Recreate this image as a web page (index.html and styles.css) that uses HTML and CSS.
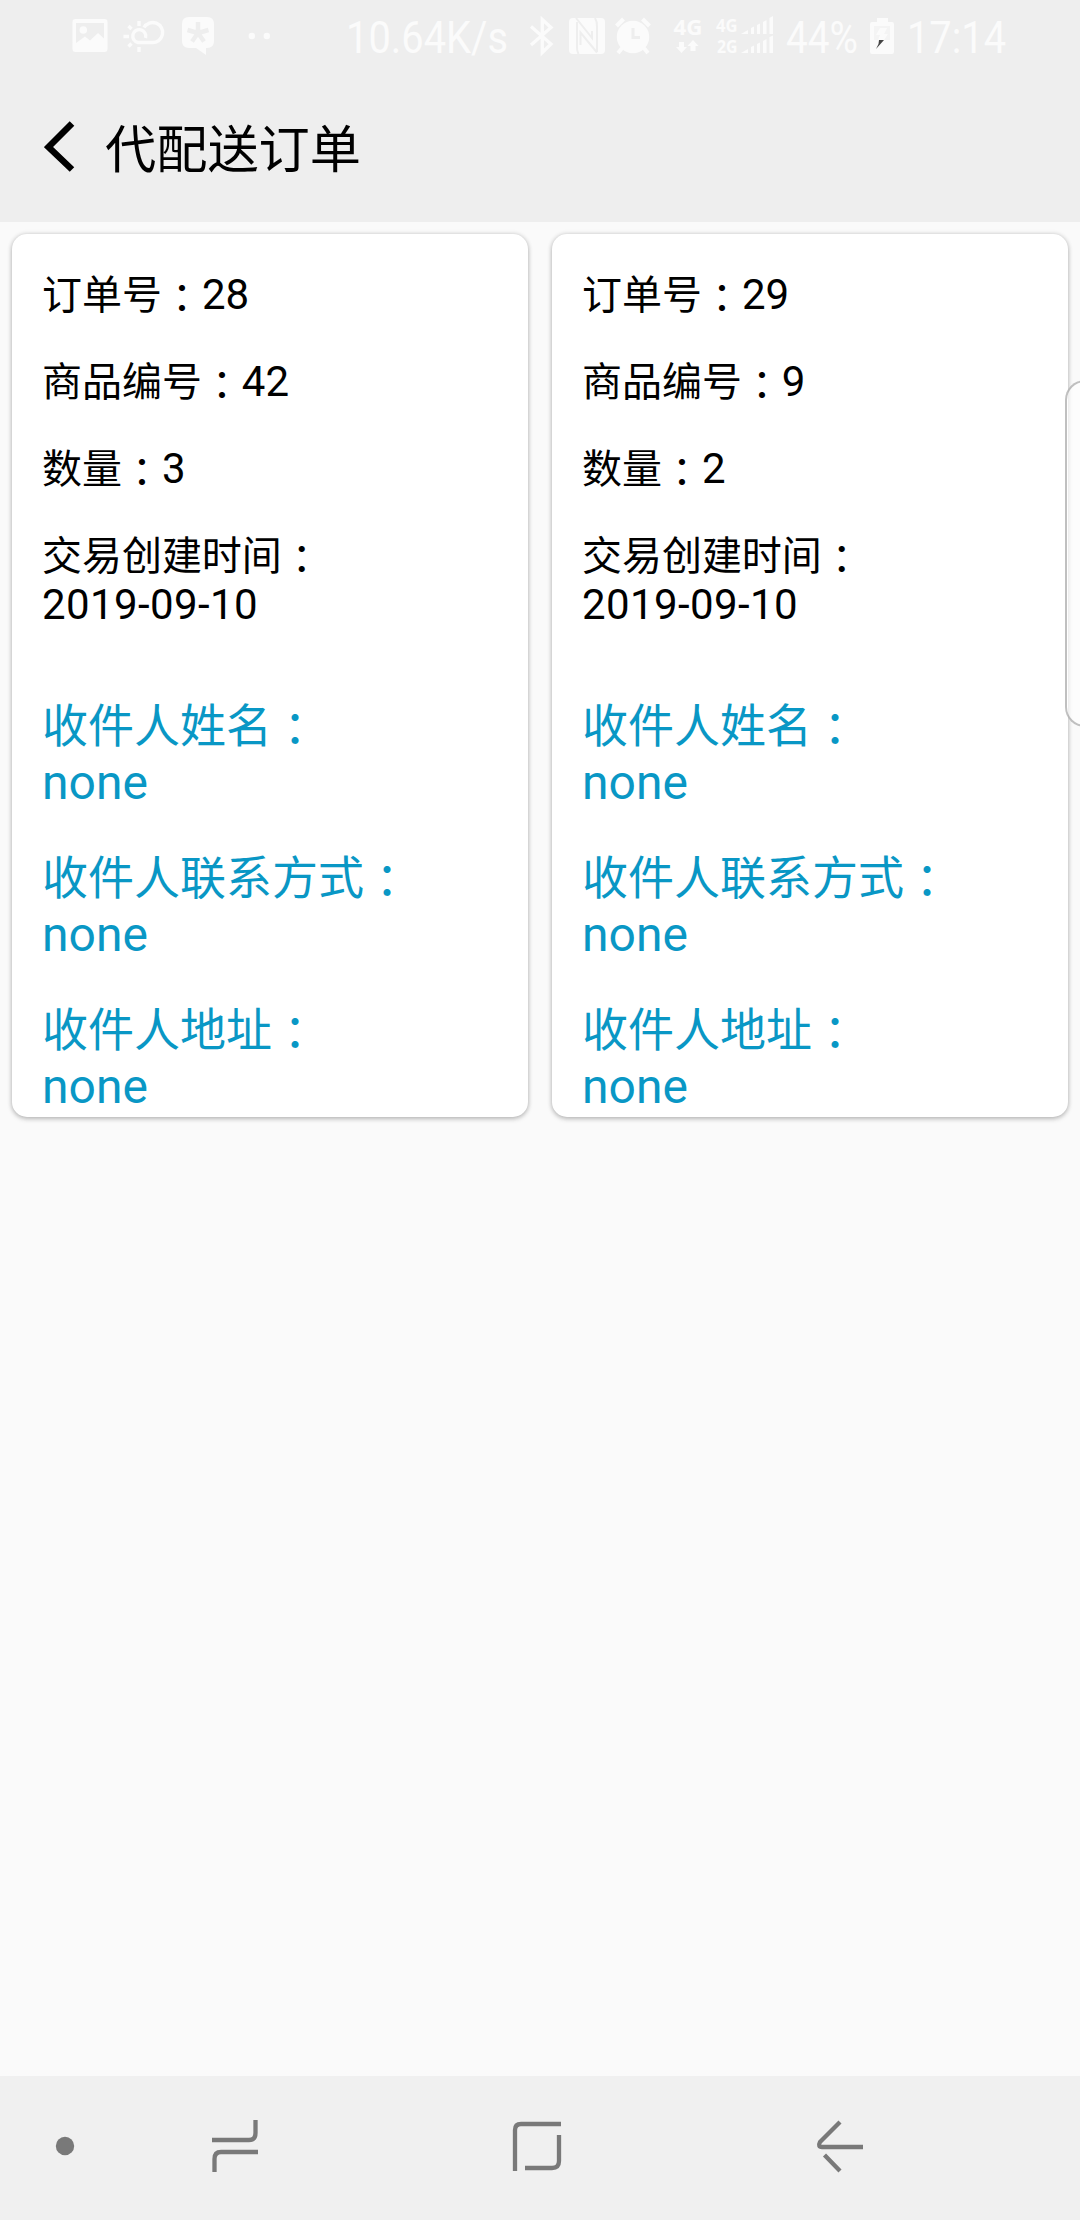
FILE: index.html
```html
<!DOCTYPE html>
<html lang="zh-CN">
<head>
<meta charset="utf-8">
<title>代配送订单</title>
<link rel="stylesheet" href="styles.css">
</head>
<body>
<div class="screen">
  <header class="top">
    <div class="status">
      <svg class="icon" width="50" height="74" viewBox="65 0 50 74">
        <path fill-rule="evenodd" d="M75.500 19H104.500Q107.500 19 107.500 22V49Q107.500 52 104.500 52H75.500Q72.500 52 72.500 49V22Q72.500 19 75.500 19ZM76 23V43L85 36.500L90 40.500L98 33L104 38.500V23Z"/>
        <circle cx="83.300" cy="30" r="3.800"/>
      </svg>
      <svg class="icon line" width="60" height="74" viewBox="115 0 60 74">
        <path d="M145.500 38A6.500 6.500 0 1 0 138 42.500H152A10 10 0 1 0 144 27.500M139 21V26M139 47V52M123.500 36.500H129M128.500 26L131.500 29M128.500 46.500L131.500 43.500" stroke-width="3.400"/>
      </svg>
      <svg class="icon" width="60" height="74" viewBox="175 0 60 74">
        <path d="M189 17H207Q214 17 214 24V41Q214 48 207 48H206V55L196 48H189Q182 48 182 41V24Q182 17 189 17Z"/>
        <path class="cut" d="M198 33V22M198 33L187.500 30M198 33L208.500 30M198 33L192 41.500M198 33L204 41.500"/>
      </svg>
      <svg class="icon" width="50" height="74" viewBox="235 0 50 74">
        <circle cx="251.800" cy="36" r="3.200"/><circle cx="266.800" cy="36" r="3.200"/>
      </svg>
      <svg class="icon speed" width="180" height="74" viewBox="340 0 180 74">
        <text x="346" y="53" textLength="162" lengthAdjust="spacingAndGlyphs">10.64K/s</text>
      </svg>
      <svg class="icon line" width="43" height="74" viewBox="520 0 43 74">
        <path d="M531 26.500L551 44L542.300 52.500V19.500L551 27.500L531 45" stroke-width="3.300"/>
      </svg>
      <svg class="icon" width="47" height="74" viewBox="563 0 47 74">
        <rect x="569" y="18" width="36" height="36" rx="4"/>
        <path class="nfc-gap" d="M576 18L592 38V31M578.500 54Q576.500 50 577 46V22M580.500 45V32.500L597 52.500M595 18Q597.500 22 597 27V52"/>
      </svg>
      <svg class="icon" width="53" height="74" viewBox="610 0 53 74">
        <path class="bold" d="M616.500 26L623.500 19M642.500 19L649.500 26M623 47L618 53M643 47L648 53"/>
        <circle cx="633" cy="37" r="16.200"/>
        <path class="clock" d="M633 28V37.500H640"/>
      </svg>
      <svg class="icon network" width="46" height="74" viewBox="663 0 46 74">
        <text x="673.500" y="35" font-size="22" textLength="29" lengthAdjust="spacingAndGlyphs">4G</text>
        <path d="M679 42H684V47H687L681.500 53L676 47H679ZM690.500 51V46H687.500L693 40L698.500 46H695.500V51Z"/>
      </svg>
      <svg class="icon network" width="71" height="74" viewBox="709 0 71 74">
        <text x="716" y="31.500" font-size="18" textLength="21.500" lengthAdjust="spacingAndGlyphs">4G</text>
        <text x="717" y="53" font-size="18" textLength="20.500" lengthAdjust="spacingAndGlyphs">2G</text>
        <path d="M741 34L748 30V34ZM751 28L754 26.500V34H751ZM757 25L760 23.500V34H757ZM763 22L766.500 20V34H763ZM769.500 18L773 16V34H769.500ZM741 53L748 49V53ZM751 47L754 45.500V53H751ZM757 44L760 42.500V53H757ZM763 41L766.500 39V53H763ZM769.500 37L773 35.500V53H769.500Z"/>
      </svg>
      <svg class="icon" width="83" height="74" viewBox="780 0 83 74">
        <text x="786" y="53" textLength="72" lengthAdjust="spacingAndGlyphs">44%</text>
      </svg>
      <svg class="icon" width="37" height="74" viewBox="863 0 37 74">
        <path d="M877 18H888V22H892Q894 22 894 24V52Q894 54 892 54H872Q870 54 870 52V24Q870 22 872 22H877Z"/>
        <path class="cut-fill" d="M874 26H890V40H874Z"/>
        <path d="M880 28H887L884 34H888L884 40H878L880 35H876Z"/>
        <path class="spark" d="M879 40H884L876 49L878.500 44Z"/>
      </svg>
      <svg class="icon" width="120" height="74" viewBox="900 0 120 74">
        <text x="907" y="53" textLength="99" lengthAdjust="spacingAndGlyphs">17:14</text>
      </svg>
    </div>
    <div class="toolbar">
      <svg class="back" width="32" height="54" viewBox="0 0 32 54"><path d="M28 4.500L4.500 28L28 50.500"/></svg>
      <h1 class="title">代配送订单</h1>
    </div>
  </header>

  <main class="orders">
    <section class="card">
      <p class="field"><span class="zh">订单号<span class="colon" lang="zh-TW">：</span></span>28</p>
      <p class="field"><span class="zh">商品编号<span class="colon" lang="zh-TW">：</span></span>42</p>
      <p class="field"><span class="zh">数量<span class="colon" lang="zh-TW">：</span></span>3</p>
      <p class="field"><span class="zh">交易创建时间<span class="colon" lang="zh-TW">：</span></span><br><span class="date">2019-09-10</span></p>
      <div class="recipient">
        <p class="field"><span class="zh">收件人姓名<span class="colon" lang="zh-TW">：</span></span><br>none</p>
        <p class="field"><span class="zh">收件人联系方式<span class="colon" lang="zh-TW">：</span></span><br>none</p>
        <p class="field"><span class="zh">收件人地址<span class="colon" lang="zh-TW">：</span></span><br>none</p>
      </div>
    </section>
    <section class="card">
      <p class="field"><span class="zh">订单号<span class="colon" lang="zh-TW">：</span></span>29</p>
      <p class="field"><span class="zh">商品编号<span class="colon" lang="zh-TW">：</span></span>9</p>
      <p class="field"><span class="zh">数量<span class="colon" lang="zh-TW">：</span></span>2</p>
      <p class="field"><span class="zh">交易创建时间<span class="colon" lang="zh-TW">：</span></span><br><span class="date">2019-09-10</span></p>
      <div class="recipient">
        <p class="field"><span class="zh">收件人姓名<span class="colon" lang="zh-TW">：</span></span><br>none</p>
        <p class="field"><span class="zh">收件人联系方式<span class="colon" lang="zh-TW">：</span></span><br>none</p>
        <p class="field"><span class="zh">收件人地址<span class="colon" lang="zh-TW">：</span></span><br>none</p>
      </div>
    </section>
  </main>

  <nav class="navbar">
    <svg width="20" height="20" viewBox="0 0 20 20"><circle class="dot" cx="10" cy="10" r="9.200"/></svg>
    <svg width="48" height="56" viewBox="0 0 48 56"><path d="M1 22H38Q44.500 22 44.500 15V2M47 34H10Q3.500 34 3.500 41V54"/></svg>
    <svg width="50" height="52" viewBox="0 0 50 52"><path d="M3 51V10Q3 4 9 4H49M47 15V41Q47 48 40 48H13"/></svg>
    <svg width="48" height="54" viewBox="0 0 48 54"><path d="M24 3L4 23Q1.500 28 6 28H47M8.500 36L24 52"/></svg>
  </nav>
  <div class="edge-handle"></div>
</div>
</body>
</html>
```

FILE: styles.css
```css
* { box-sizing: border-box; }

body, h1, p { margin: 0; }

body {
  background: #fafafa;
  color: #000;
  font-family: Roboto, "Noto Sans CJK SC", sans-serif;
}

.screen {
  position: relative;
  display: flex;
  flex-direction: column;
  width: 1080px;
  height: 2220px;
  overflow: hidden;
}

.top { height: 222px; background: #eee; }

.status { display: flex; height: 74px; padding-left: 65px; }
.icon { flex: none; overflow: visible; fill: #fbfbfb; font-size: 45px; }
.line { fill: none; stroke: #fbfbfb; }
.speed { margin-left: 55px; }
.network { font-weight: 700; font-family: "Open Sans", sans-serif; }
.cut { fill: none; stroke: #eee; stroke-width: 4.5; }
.nfc-gap { fill: none; stroke: #eee; stroke-width: 2; }
.bold { stroke: #fbfbfb; stroke-width: 4; }
.clock { fill: none; stroke: #eee; stroke-width: 3; }
.cut-fill { fill: #f4f4f4; }
.spark { fill: #444; }

.toolbar { display: flex; align-items: center; height: 148px; padding: 0 0 4px 44px; }
.back { fill: none; stroke: #000; stroke-width: 6.5; }
.title {
  margin-left: 29px;
  font: 400 51.2px/74px "Noto Sans CJK SC", sans-serif;
}

.orders {
  flex: 1;
  display: grid;
  grid-template-columns: 1fr 1fr;
  align-items: start;
  gap: 24px;
  padding: 12px;
}

.card {
  height: 883px;
  padding: 36px 30px 0;
  border-radius: 15px;
  background: #fff;
  box-shadow: 0 2px 5px rgba(0, 0, 0, .22), 0 0 5px rgba(0, 0, 0, .14);
}

.field { font-size: 42px; line-height: 49px; }
.field + .field { margin-top: 38px; }
.zh { font-family: "Noto Sans CJK SC", sans-serif; font-size: .952em; line-height: 1; }
.colon { font-family: "Noto Sans CJK TC", sans-serif; line-height: 0; vertical-align: -.09em; }
.date { letter-spacing: .4px; }

.recipient { margin-top: 68px; color: #0997c5; }
.recipient .field { font-size: 48px; line-height: 57px; }
.recipient .zh { font-size: 46px; }

.navbar {
  display: flex;
  align-items: center;
  height: 144px;
  padding: 0 0 4px 55px;
  background: #f0f0f0;
}
.navbar svg { flex: none; fill: none; stroke: #797979; stroke-width: 4.300; }
.navbar svg:nth-child(2) { margin-left: 136px; }
.navbar svg:nth-child(3) { margin-left: 253px; }
.navbar svg:nth-child(4) { margin-left: 254px; }
.navbar .dot { fill: #797979; stroke: none; }

/* edge panel tab, floats over the right side of the list */
.edge-handle {
  position: absolute;
  top: 380px;
  right: -30px;
  width: 45px;
  height: 347px;
  border: 2px solid rgba(150, 150, 150, .6);
  border-radius: 20px;
  background: rgba(255, 255, 255, .6);
}
```
